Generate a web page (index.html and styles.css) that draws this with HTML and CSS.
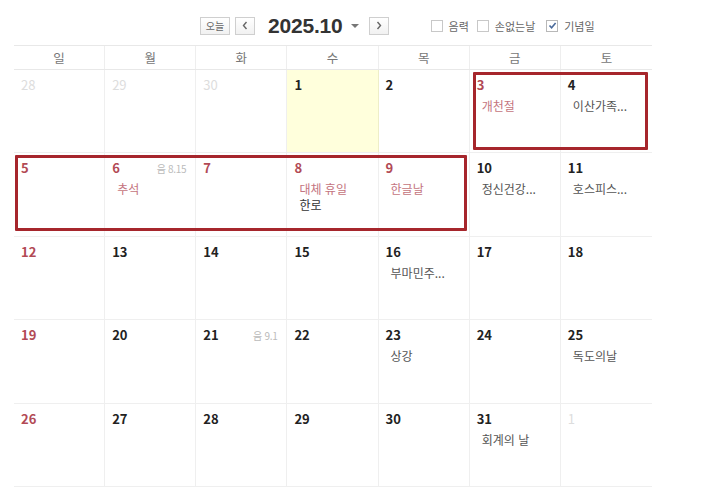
FILE: index.html
```html
<!DOCTYPE html>
<html lang="ko">
<head>
<meta charset="utf-8">
<link rel="stylesheet" href="styles.css">
</head>
<body>
<div class="page">
  <div class="toolbar">
    <span class="btn btn-today">오늘</span>
    <span class="btn btn-arrow prev">
      <svg width="8" height="9" viewBox="0 0 8 9"><path d="M5.5 1 L2.5 4.5 L5.5 8" fill="none" stroke="#666" stroke-width="1.4"/></svg>
    </span>
    <span class="title">2025.10</span>
    <span class="caret"></span>
    <span class="btn btn-arrow next">
      <svg width="8" height="9" viewBox="0 0 8 9"><path d="M2.5 1 L5.5 4.5 L2.5 8" fill="none" stroke="#666" stroke-width="1.4"/></svg>
    </span>
    <div class="checks">
      <label class="chk"><span class="box"></span>음력</label>
      <label class="chk chk2"><span class="box"></span>손없는날</label>
      <label class="chk chk3"><span class="box checked"><svg width="9" height="9" viewBox="0 0 9 9"><path d="M1.5 4.5 L3.6 6.8 L7.6 2" fill="none" stroke="#4a6a9a" stroke-width="1.6"/></svg></span>기념일</label>
    </div>
  </div>

  <div class="cal">
    <div class="head">
      <div class="hd">일</div><div class="hd">월</div><div class="hd">화</div><div class="hd">수</div><div class="hd">목</div><div class="hd">금</div><div class="hd last">토</div>
    </div>
    <div class="grid">
      <div class="cell"><div class="top"><span class="num other">28</span></div></div>
      <div class="cell"><div class="top"><span class="num other">29</span></div></div>
      <div class="cell"><div class="top"><span class="num other">30</span></div></div>
      <div class="cell today"><div class="top"><span class="num">1</span></div></div>
      <div class="cell"><div class="top"><span class="num">2</span></div></div>
      <div class="cell"><div class="top"><span class="num red">3</span></div><div class="ev hol">개천절</div></div>
      <div class="cell last"><div class="top"><span class="num">4</span></div><div class="ev">이산가족...</div></div>

      <div class="cell"><div class="top"><span class="num red">5</span></div></div>
      <div class="cell"><div class="top"><span class="num red">6</span><span class="lunar">음 8.15</span></div><div class="ev hol">추석</div></div>
      <div class="cell"><div class="top"><span class="num red">7</span></div></div>
      <div class="cell"><div class="top"><span class="num red">8</span></div><div class="ev hol">대체 휴일</div><div class="ev2">한로</div></div>
      <div class="cell"><div class="top"><span class="num red">9</span></div><div class="ev hol">한글날</div></div>
      <div class="cell"><div class="top"><span class="num">10</span></div><div class="ev">정신건강...</div></div>
      <div class="cell last"><div class="top"><span class="num">11</span></div><div class="ev">호스피스...</div></div>

      <div class="cell"><div class="top"><span class="num red">12</span></div></div>
      <div class="cell"><div class="top"><span class="num">13</span></div></div>
      <div class="cell"><div class="top"><span class="num">14</span></div></div>
      <div class="cell"><div class="top"><span class="num">15</span></div></div>
      <div class="cell"><div class="top"><span class="num">16</span></div><div class="ev">부마민주...</div></div>
      <div class="cell"><div class="top"><span class="num">17</span></div></div>
      <div class="cell last"><div class="top"><span class="num">18</span></div></div>

      <div class="cell"><div class="top"><span class="num red">19</span></div></div>
      <div class="cell"><div class="top"><span class="num">20</span></div></div>
      <div class="cell"><div class="top"><span class="num">21</span><span class="lunar">음 9.1</span></div></div>
      <div class="cell"><div class="top"><span class="num">22</span></div></div>
      <div class="cell"><div class="top"><span class="num">23</span></div><div class="ev">상강</div></div>
      <div class="cell"><div class="top"><span class="num">24</span></div></div>
      <div class="cell last"><div class="top"><span class="num">25</span></div><div class="ev">독도의날</div></div>

      <div class="cell"><div class="top"><span class="num red">26</span></div></div>
      <div class="cell"><div class="top"><span class="num">27</span></div></div>
      <div class="cell"><div class="top"><span class="num">28</span></div></div>
      <div class="cell"><div class="top"><span class="num">29</span></div></div>
      <div class="cell"><div class="top"><span class="num">30</span></div></div>
      <div class="cell"><div class="top"><span class="num">31</span></div><div class="ev">회계의 날</div></div>
      <div class="cell last"><div class="top"><span class="num other">1</span></div></div>
    </div>
    <div class="mark mark1"></div>
    <div class="mark mark2"></div>
  </div>
</div>
</body>
</html>
```

FILE: styles.css
```css
* { box-sizing: border-box; }
html, body { margin: 0; padding: 0; background: #fff; }
body {
  font-family: "Noto Sans CJK KR", "Noto Sans", sans-serif;
  color: #222;
  width: 718px;
  height: 487px;
  overflow: hidden;
}
.page { width: 718px; }

.toolbar {
  height: 45px;
  display: flex;
  align-items: center;
  padding-left: 200px;
  padding-top: 6px;
}
.btn {
  display: inline-flex;
  align-items: center;
  justify-content: center;
  height: 18px;
  border: 1px solid #cfcfcf;
  background: linear-gradient(#fff, #f1f1f1);
  color: #666;
  font-size: 10px;
  line-height: 1;
}
.btn-today { width: 30px; }
.btn-arrow { width: 20px; }
.prev { margin-left: 5px; }
.title {
  margin-left: 13px;
  font-family: "Liberation Sans", Arial, sans-serif;
  font-weight: bold;
  font-size: 21px;
  color: #333;
  line-height: 1;
  letter-spacing: -0.2px;
}
.caret {
  margin-left: 8px;
  width: 0; height: 0;
  border-left: 4px solid transparent;
  border-right: 4px solid transparent;
  border-top: 4px solid #777;
}
.next { margin-left: 10px; }
.checks {
  display: flex;
  align-items: center;
  margin-left: 42px;
}
.chk {
  display: inline-flex;
  align-items: center;
  gap: 6px;
  font-size: 11px;
  color: #666;
}
.chk2 { margin-left: 8px; }
.chk3 { margin-left: 11px; }
.box {
  display: inline-flex;
  align-items: center;
  justify-content: center;
  width: 12px; height: 12px;
  border: 1px solid #c8c8c8;
  background: #fff;
}
.box.checked { border-color: #b8b8b8; }

.cal {
  position: relative;
  margin-left: 14px;
  width: 638px;
}
.head {
  display: grid;
  grid-template-columns: repeat(7, 1fr);
  height: 25px;
  border-top: 1px solid #e8e8e8;
  border-bottom: 1px solid #e8e8e8;
}
.hd {
  display: flex;
  align-items: center;
  justify-content: center;
  font-size: 12.5px;
  color: #777;
  border-right: 1px solid #eee;
}
.hd.last { border-right: none; }

.grid {
  display: grid;
  grid-template-columns: repeat(7, 1fr);
  grid-auto-rows: 83.4px;
}
.cell {
  border-right: 1px solid #efefef;
  border-bottom: 1px solid #efefef;
  padding: 6px 9px 0 7px;
}
.cell.last { border-right: none; }
.cell.today { background: #ffffdc; border-right-color: #eeeec8; }
.top {
  display: flex;
  justify-content: space-between;
  align-items: center;
  height: 18px;
}
.num {
  font-weight: bold;
  font-size: 13px;
  color: #222;
  line-height: 18px;
}
.num.red { color: #b24a55; }
.num.other { color: #ddd; font-weight: normal; }
.lunar {
  font-size: 10px;
  color: #bbb;
  letter-spacing: -0.3px;
}
.ev {
  margin-top: 4px;
  padding-left: 5px;
  font-size: 12px;
  line-height: 16px;
  color: #555;
  white-space: nowrap;
}
.ev.hol { color: #c47480; }
.ev2 {
  padding-left: 5px;
  font-size: 12px;
  line-height: 16px;
  color: #333;
}

.mark {
  position: absolute;
  border: 3px solid #a6262c;
  border-radius: 1px;
  pointer-events: none;
}
.mark1 { left: 459px; top: 27px; width: 175px; height: 78px; }
.mark2 { left: 1px; top: 110px; width: 452px; height: 76px; }
```
